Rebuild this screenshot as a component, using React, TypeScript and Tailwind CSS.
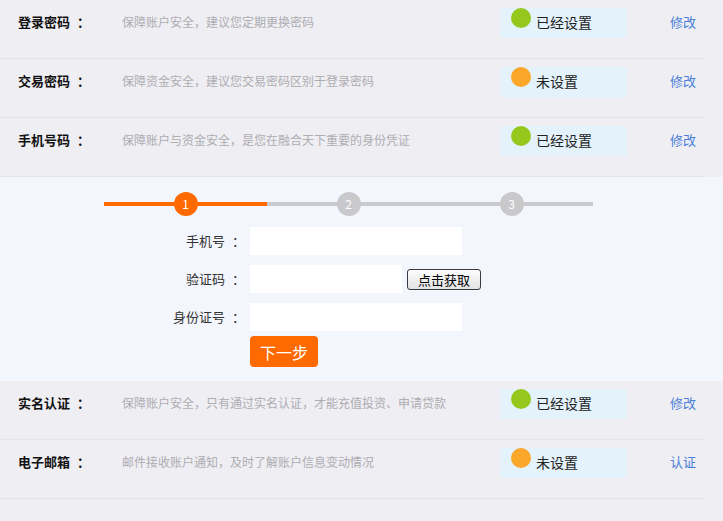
import React from 'react';

interface SecurityItem {
  id: string;
  label: string;
  desc: string;
  done: boolean;
  action: string;
}

const TOP: SecurityItem[] = [
  { id: 'login', label: '登录密码', desc: '保障账户安全，建议您定期更换密码', done: true, action: '修改' },
  { id: 'trade', label: '交易密码', desc: '保障资金安全，建议您交易密码区别于登录密码', done: false, action: '修改' },
  { id: 'phone', label: '手机号码', desc: '保障账户与资金安全，是您在融合天下重要的身份凭证', done: true, action: '修改' },
];

const BOTTOM: SecurityItem[] = [
  { id: 'real', label: '实名认证', desc: '保障账户安全，只有通过实名认证，才能充值投资、申请贷款', done: true, action: '修改' },
  { id: 'mail', label: '电子邮箱', desc: '邮件接收账户通知，及时了解账户信息变动情况', done: false, action: '认证' },
];

const font = 'font-["Noto_Sans_CJK_SC","Noto_Sans",sans-serif]';

// full-width colon sits at the left of its box in Noto CJK, nudge it to the centre
const Colon = () => <span className="inline-block w-[13px] pl-[7px] whitespace-nowrap">：</span>;

const Row: React.FC<{ item: SecurityItem }> = ({ item }) => (
  <div className="w-[705px] h-[59px] border-b border-[#e3e3ea] flex items-start pt-[7px]">
    <div className="w-[122px] pl-[18px] h-[30px] flex items-center text-[13px] font-bold text-[#111]">
      {item.label}
      <Colon />
    </div>
    <div className="w-[378px] h-[30px] flex items-center text-[12px] text-[#adadb2]">{item.desc}</div>
    <div className="mt-px w-[127px] h-[30px] bg-[#e4f2fc] rounded-[4px] flex items-start pl-[11px]">
      <span className={`w-5 h-5 rounded-full ${item.done ? 'bg-[#94c81c]' : 'bg-[#fba72a]'}`}></span>
      <span className="ml-[5px] h-[28px] flex items-center text-[14px] text-[#222]">
        {item.done ? '已经设置' : '未设置'}
      </span>
    </div>
    <div className="ml-[43px] h-[30px] flex items-center text-[13px] text-[#4a7fd8]">{item.action}</div>
  </div>
);

const Step: React.FC<{ n: number; active: boolean }> = ({ n, active }) => (
  <div className={`w-[163px] h-[4px] flex items-center justify-center ${active ? 'bg-[#ff6a00]' : 'bg-[#cbcbcf]'}`}>
    <span
      className={`w-6 h-6 shrink-0 rounded-full flex items-center justify-center text-[12px] text-white ${
        active ? 'bg-[#ff6a00]' : 'bg-[#c9c9cc]'
      }`}
    >
      {n}
    </span>
  </div>
);

const FieldLabel: React.FC<{ text: string }> = ({ text }) => (
  <span className="w-[238px] text-right text-[13px] text-[#333]">
    {text}
    <Colon />
  </span>
);

export default function App() {
  return (
    <div className={`w-[723px] h-[521px] bg-[#efeef3] overflow-hidden ${font}`}>
      {TOP.map((item) => (
        <Row key={item.id} item={item} />
      ))}

      <div className="w-full h-[204px] bg-[#f3f6fc] pt-[25px]">
        <div className="ml-[104px] flex">
          <Step n={1} active />
          <Step n={2} active={false} />
          <Step n={3} active={false} />
        </div>

        <div className="mt-[21px] flex flex-col gap-[10px]">
          <div className="flex items-center">
            <FieldLabel text="手机号" />
            <input className="ml-[12px] w-[212px] h-[28px] bg-white outline-none" />
          </div>
          <div className="flex items-center">
            <FieldLabel text="验证码" />
            <input className="ml-[12px] w-[152px] h-[28px] bg-white outline-none" />
            <button className="ml-[5px] w-[74px] h-[21px] border border-[#3a3a40] rounded-[3px] bg-gradient-to-b from-[#fdfdfd] to-[#e3e3e3] text-[13px] text-black leading-none">
              点击获取
            </button>
          </div>
          <div className="flex items-center">
            <FieldLabel text="身份证号" />
            <input className="ml-[12px] w-[212px] h-[28px] bg-white outline-none" />
          </div>
        </div>

        <button className="ml-[250px] mt-[5px] w-[68px] h-[31px] rounded-[4px] bg-[#ff6a00] text-white text-[16px] flex items-center justify-center">
          下一步
        </button>
      </div>

      {BOTTOM.map((item) => (
        <Row key={item.id} item={item} />
      ))}
    </div>
  );
}
